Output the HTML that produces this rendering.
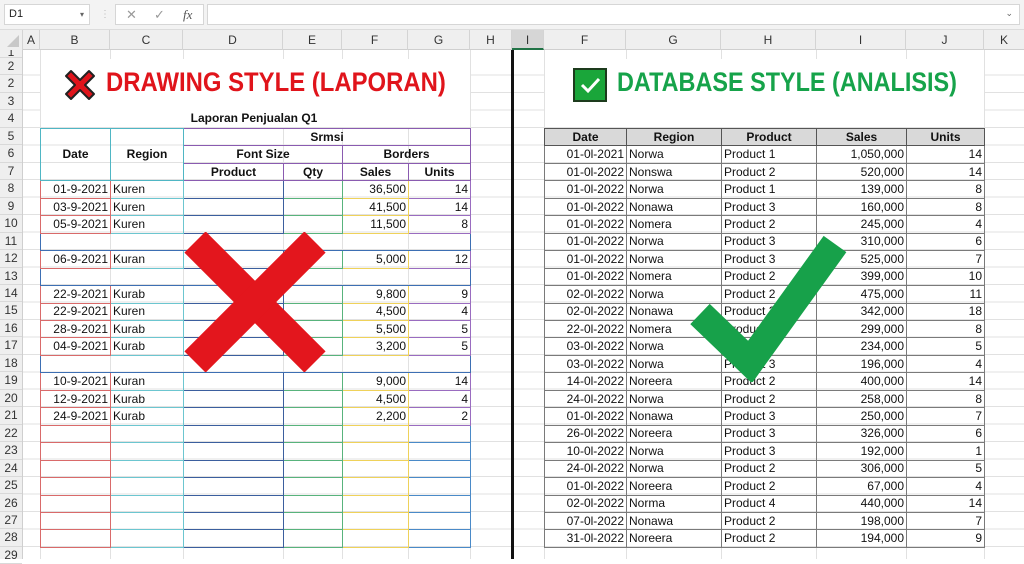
<!DOCTYPE html>
<html><head><meta charset="utf-8">
<style>
*{margin:0;padding:0;box-sizing:border-box}
body{width:1024px;height:559px;overflow:hidden;background:#fff;font-family:"Liberation Sans",sans-serif;font-size:12px;color:#111;position:relative}
.abs{position:absolute}
#top{left:0;top:0;width:1024px;height:30px;background:#f3f3f3;border-bottom:1px solid #dcdcdc}
.box{position:absolute;background:#fff;border:1px solid #d6d6d6;height:21px;top:4px}
#colh{left:0;top:30px;width:1024px;height:20px;background:#efefef;border-bottom:1px solid #cfcfcf}
.ch{position:absolute;top:30px;height:20px;line-height:20px;text-align:center;font-size:12px;color:#333;border-right:1px solid #d4d4d4}
#rowh{left:0;top:50px;width:23px;height:509px;background:#efefef;border-right:1px solid #cfcfcf}
.rn{position:absolute;left:0;width:22px;text-align:center;font-size:12px;color:#333;height:17.46px;line-height:17.46px;border-bottom:1px solid #d9d9d9}
#grid{left:23px;top:58px;width:1001px;height:501px;background-image:repeating-linear-gradient(to bottom,transparent 0,transparent 16.46px,#e1e1e1 16.46px,#e1e1e1 17.46px)}
.vl{position:absolute;top:50px;width:1px;height:509px;background:#e1e1e1}
table{border-collapse:collapse;table-layout:fixed;position:absolute}
td{height:17.46px;padding:0 2px;white-space:nowrap;overflow:hidden;font-size:12px;line-height:15px}
.r{text-align:right}.c{text-align:center}.b{font-weight:bold}
#lt td{border:1px solid #ccc}
#lt .hb{border-color:#4fb6c4}
#lt .hp{border-color:#8a5bb0}
#lt .cb{border-color:#d96a6a}
#lt .cc{border-color:#6cc6d0}
#lt .cd{border-color:#3b5f9e}
#lt .ce{border-color:#58b37c}
#lt .cf{border-color:#efd25a}
#lt .cg{border-color:#9a6cc0}
#lt .cgb{border-color:#4a8ac8}
#lt .em{border-color:#3d6fb3}
#rt td{border:1px solid #7a7a7a}
#rt tr:first-child td{background:#d9d9d9;font-weight:bold;text-align:center;border-color:#555}
</style></head><body>
<div id="top" class="abs">
 <div class="box" style="left:4px;width:86px;font-size:11px;line-height:19px;padding-left:4px;color:#222">D1<span style="position:absolute;right:5px;font-size:8px;color:#666">▾</span></div>
 <div class="abs" style="left:100px;top:9px;color:#bbb;font-size:10px">⋮</div>
 <div class="box" style="left:115px;width:89px;color:#999;font-size:13px;line-height:19px"><span style="position:absolute;left:10px">✕</span><span style="position:absolute;left:38px">✓</span><span style="position:absolute;left:67px;font-family:'Liberation Serif',serif;font-style:italic;color:#555">fx</span></div>
 <div class="box" style="left:207px;width:813px"><span style="position:absolute;right:6px;top:3px;font-size:9px;color:#666">⌄</span></div>
</div>
<div id="colh" class="abs"></div>
<div class="abs" style="left:0;top:30px;width:23px;height:20px;background:#efefef;border-right:1px solid #d4d4d4"><div style="position:absolute;right:3px;bottom:3px;width:0;height:0;border-left:12px solid transparent;border-bottom:12px solid #c8c8c8"></div></div>
<div class="ch" style="left:23px;width:17px">A</div>
<div class="ch" style="left:40px;width:70px">B</div>
<div class="ch" style="left:110px;width:73px">C</div>
<div class="ch" style="left:183px;width:100px">D</div>
<div class="ch" style="left:283px;width:59px">E</div>
<div class="ch" style="left:342px;width:66px">F</div>
<div class="ch" style="left:408px;width:62px">G</div>
<div class="ch" style="left:470px;width:42px">H</div>
<div class="ch" style="left:512px;width:32px;background:#d6d6d6;border-bottom:2px solid #217346">I</div>
<div class="ch" style="left:544px;width:82px">F</div>
<div class="ch" style="left:626px;width:95px">G</div>
<div class="ch" style="left:721px;width:95px">H</div>
<div class="ch" style="left:816px;width:90px">I</div>
<div class="ch" style="left:906px;width:78px">J</div>
<div class="ch" style="left:984px;width:40px;border:none">K</div>

<div id="grid" class="abs"></div>
<div class="vl" style="left:40px"></div><div class="vl" style="left:110px"></div><div class="vl" style="left:183px"></div><div class="vl" style="left:283px"></div><div class="vl" style="left:342px"></div><div class="vl" style="left:408px"></div><div class="vl" style="left:470px"></div><div class="vl" style="left:544px"></div><div class="vl" style="left:626px"></div><div class="vl" style="left:721px"></div><div class="vl" style="left:816px"></div><div class="vl" style="left:906px"></div><div class="vl" style="left:984px"></div>
<div class="abs" style="left:41px;top:59px;width:429px;height:68px;background:#fff"></div>
<div class="abs" style="left:545px;top:59px;width:439px;height:68px;background:#fff"></div>

<div id="rowh" class="abs">
<div class="rn" style="top:0;height:8px;line-height:4px;overflow:hidden">1</div>
<div class="rn" style="top:8px">2</div><div class="rn" style="top:25.46px">2</div>
<div class="rn" style="top:42.9px">3</div><div class="rn" style="top:60.4px">4</div><div class="rn" style="top:77.8px">5</div><div class="rn" style="top:95.3px">6</div><div class="rn" style="top:112.8px">7</div><div class="rn" style="top:130.2px">8</div><div class="rn" style="top:147.7px">9</div><div class="rn" style="top:165.1px">10</div><div class="rn" style="top:182.6px">11</div><div class="rn" style="top:200.1px">12</div><div class="rn" style="top:217.5px">13</div><div class="rn" style="top:235px">14</div><div class="rn" style="top:252.4px">15</div><div class="rn" style="top:269.9px">16</div><div class="rn" style="top:287.4px">17</div><div class="rn" style="top:304.8px">18</div><div class="rn" style="top:322.3px">19</div><div class="rn" style="top:339.7px">20</div><div class="rn" style="top:357.2px">21</div><div class="rn" style="top:374.7px">22</div><div class="rn" style="top:392.1px">23</div><div class="rn" style="top:409.6px">24</div><div class="rn" style="top:427px">25</div><div class="rn" style="top:444.5px">26</div><div class="rn" style="top:462px">27</div><div class="rn" style="top:479.4px">28</div><div class="rn" style="top:496.9px">29</div>
</div>

<div class="abs" style="left:511px;top:50px;width:3px;height:509px;background:#111"></div>

<svg class="abs" style="left:62px;top:67px" width="36" height="36" viewBox="0 0 36 36"><path d="M4 9 L9 4 L18 13 L27 4 L32 9 L23 18 L32 27 L27 32 L18 23 L9 32 L4 27 L13 18 Z" fill="#e0141b" stroke="#222" stroke-width="2" stroke-linejoin="round"/></svg>
<div class="abs b" style="left:106px;top:67px;font-size:27px;color:#e0141b;white-space:nowrap;transform:scaleX(0.885);transform-origin:0 0">DRAWING STYLE (LAPORAN)</div>
<svg class="abs" style="left:573px;top:68px" width="34" height="34" viewBox="0 0 34 34"><rect x="1" y="1" width="32" height="32" fill="#1aa63a" stroke="#1d3b1d" stroke-width="2"/><path d="M9 17 L15 23 L26 11" fill="none" stroke="#fff" stroke-width="3"/></svg>
<div class="abs b" style="left:617px;top:67px;font-size:27px;color:#16a34a;white-space:nowrap;transform:scaleX(0.867);transform-origin:0 0">DATABASE STYLE (ANALISIS)</div>

<div class="abs b" style="left:183px;top:111px;width:142px;text-align:center;font-size:12px">Laporan Penjualan Q1</div>

<table id="lt" style="left:40px;top:128px;width:430px">
<colgroup><col style="width:70px"><col style="width:73px"><col style="width:100px"><col style="width:59px"><col style="width:66px"><col style="width:62px"></colgroup>
<tr><td rowspan="3" class="hb c b">Date</td><td rowspan="3" class="hb c b">Region</td><td colspan="4" class="hp c b">Srmsi</td></tr>
<tr><td colspan="2" class="hp c b">Font Size</td><td colspan="2" class="hp c b">Borders</td></tr>
<tr><td class="hp c b">Product</td><td class="hp c b">Qty</td><td class="hp c b">Sales</td><td class="hp c b">Units</td></tr>
<tr><td class="cb r">01-9-2021</td><td class="cc">Kuren</td><td class="cd"></td><td class="ce"></td><td class="cf r">36,500</td><td class="cg r">14</td></tr>
<tr><td class="cb r">03-9-2021</td><td class="cc">Kuren</td><td class="cd"></td><td class="ce"></td><td class="cf r">41,500</td><td class="cg r">14</td></tr>
<tr><td class="cb r">05-9-2021</td><td class="cc">Kuren</td><td class="cd"></td><td class="ce"></td><td class="cf r">11,500</td><td class="cg r">8</td></tr>
<tr><td colspan="6" class="em"></td></tr>
<tr><td class="cb r">06-9-2021</td><td class="cc">Kuran</td><td class="cd"></td><td class="ce"></td><td class="cf r">5,000</td><td class="cg r">12</td></tr>
<tr><td colspan="6" class="em"></td></tr>
<tr><td class="cb r">22-9-2021</td><td class="cc">Kurab</td><td class="cd"></td><td class="ce"></td><td class="cf r">9,800</td><td class="cg r">9</td></tr>
<tr><td class="cb r">22-9-2021</td><td class="cc">Kuren</td><td class="cd"></td><td class="ce"></td><td class="cf r">4,500</td><td class="cg r">4</td></tr>
<tr><td class="cb r">28-9-2021</td><td class="cc">Kurab</td><td class="cd"></td><td class="ce"></td><td class="cf r">5,500</td><td class="cg r">5</td></tr>
<tr><td class="cb r">04-9-2021</td><td class="cc">Kurab</td><td class="cd"></td><td class="ce"></td><td class="cf r">3,200</td><td class="cg r">5</td></tr>
<tr><td colspan="6" class="em"></td></tr>
<tr><td class="cb r">10-9-2021</td><td class="cc">Kuran</td><td class="cd"></td><td class="ce"></td><td class="cf r">9,000</td><td class="cg r">14</td></tr>
<tr><td class="cb r">12-9-2021</td><td class="cc">Kurab</td><td class="cd"></td><td class="ce"></td><td class="cf r">4,500</td><td class="cg r">4</td></tr>
<tr><td class="cb r">24-9-2021</td><td class="cc">Kurab</td><td class="cd"></td><td class="ce"></td><td class="cf r">2,200</td><td class="cg r">2</td></tr>
<tr><td class="cb"></td><td class="cc"></td><td class="cd"></td><td class="ce"></td><td class="cf"></td><td class="cgb"></td></tr>
<tr><td class="cb"></td><td class="cc"></td><td class="cd"></td><td class="ce"></td><td class="cf"></td><td class="cgb"></td></tr>
<tr><td class="cb"></td><td class="cc"></td><td class="cd"></td><td class="ce"></td><td class="cf"></td><td class="cgb"></td></tr>
<tr><td class="cb"></td><td class="cc"></td><td class="cd"></td><td class="ce"></td><td class="cf"></td><td class="cgb"></td></tr>
<tr><td class="cb"></td><td class="cc"></td><td class="cd"></td><td class="ce"></td><td class="cf"></td><td class="cgb"></td></tr>
<tr><td class="cb"></td><td class="cc"></td><td class="cd"></td><td class="ce"></td><td class="cf"></td><td class="cgb"></td></tr>
<tr><td class="cb"></td><td class="cc"></td><td class="cd"></td><td class="ce"></td><td class="cf"></td><td class="cgb"></td></tr>
</table>

<table id="rt" style="left:544px;top:128px;width:440px">
<colgroup><col style="width:82px"><col style="width:95px"><col style="width:95px"><col style="width:90px"><col style="width:78px"></colgroup>
<tr><td>Date</td><td>Region</td><td>Product</td><td>Sales</td><td>Units</td></tr>
<tr><td class="r">01-0l-2021</td><td>Norwa</td><td>Product 1</td><td class="r">1,050,000</td><td class="r">14</td></tr>
<tr><td class="r">01-0l-2022</td><td>Nonswa</td><td>Product 2</td><td class="r">520,000</td><td class="r">14</td></tr>
<tr><td class="r">01-0l-2022</td><td>Norwa</td><td>Product 1</td><td class="r">139,000</td><td class="r">8</td></tr>
<tr><td class="r">01-0l-2022</td><td>Nonawa</td><td>Product 3</td><td class="r">160,000</td><td class="r">8</td></tr>
<tr><td class="r">01-0l-2022</td><td>Nomera</td><td>Product 2</td><td class="r">245,000</td><td class="r">4</td></tr>
<tr><td class="r">01-0l-2022</td><td>Norwa</td><td>Product 3</td><td class="r">310,000</td><td class="r">6</td></tr>
<tr><td class="r">01-0l-2022</td><td>Norwa</td><td>Product 3</td><td class="r">525,000</td><td class="r">7</td></tr>
<tr><td class="r">01-0l-2022</td><td>Nomera</td><td>Product 2</td><td class="r">399,000</td><td class="r">10</td></tr>
<tr><td class="r">02-0l-2022</td><td>Norwa</td><td>Product 2</td><td class="r">475,000</td><td class="r">11</td></tr>
<tr><td class="r">02-0l-2022</td><td>Nonawa</td><td>Product 2</td><td class="r">342,000</td><td class="r">18</td></tr>
<tr><td class="r">22-0l-2022</td><td>Nomera</td><td>Product 2</td><td class="r">299,000</td><td class="r">8</td></tr>
<tr><td class="r">03-0l-2022</td><td>Norwa</td><td>Product 2</td><td class="r">234,000</td><td class="r">5</td></tr>
<tr><td class="r">03-0l-2022</td><td>Norwa</td><td>Product 3</td><td class="r">196,000</td><td class="r">4</td></tr>
<tr><td class="r">14-0l-2022</td><td>Noreera</td><td>Product 2</td><td class="r">400,000</td><td class="r">14</td></tr>
<tr><td class="r">24-0l-2022</td><td>Norwa</td><td>Product 2</td><td class="r">258,000</td><td class="r">8</td></tr>
<tr><td class="r">01-0l-2022</td><td>Nonawa</td><td>Product 3</td><td class="r">250,000</td><td class="r">7</td></tr>
<tr><td class="r">26-0l-2022</td><td>Noreera</td><td>Product 3</td><td class="r">326,000</td><td class="r">6</td></tr>
<tr><td class="r">10-0l-2022</td><td>Norwa</td><td>Product 3</td><td class="r">192,000</td><td class="r">1</td></tr>
<tr><td class="r">24-0l-2022</td><td>Norwa</td><td>Product 2</td><td class="r">306,000</td><td class="r">5</td></tr>
<tr><td class="r">01-0l-2022</td><td>Noreera</td><td>Product 2</td><td class="r">67,000</td><td class="r">4</td></tr>
<tr><td class="r">02-0l-2022</td><td>Norma</td><td>Product 4</td><td class="r">440,000</td><td class="r">14</td></tr>
<tr><td class="r">07-0l-2022</td><td>Nonawa</td><td>Product 2</td><td class="r">198,000</td><td class="r">7</td></tr>
<tr><td class="r">31-0l-2022</td><td>Noreera</td><td>Product 2</td><td class="r">194,000</td><td class="r">9</td></tr>
</table>

<svg class="abs" style="left:180px;top:232px" width="150" height="140" viewBox="0 0 150 140"><g stroke="#e3161d" stroke-width="30" stroke-linecap="butt"><line x1="15" y1="10" x2="135" y2="130"/><line x1="135" y1="10" x2="15" y2="130"/></g></svg>
<svg class="abs" style="left:690px;top:232px" width="160" height="150" viewBox="0 0 160 150"><polyline points="10,82 60,130 145,12" fill="none" stroke="#17a14a" stroke-width="28" stroke-linejoin="miter"/></svg>
</body></html>
